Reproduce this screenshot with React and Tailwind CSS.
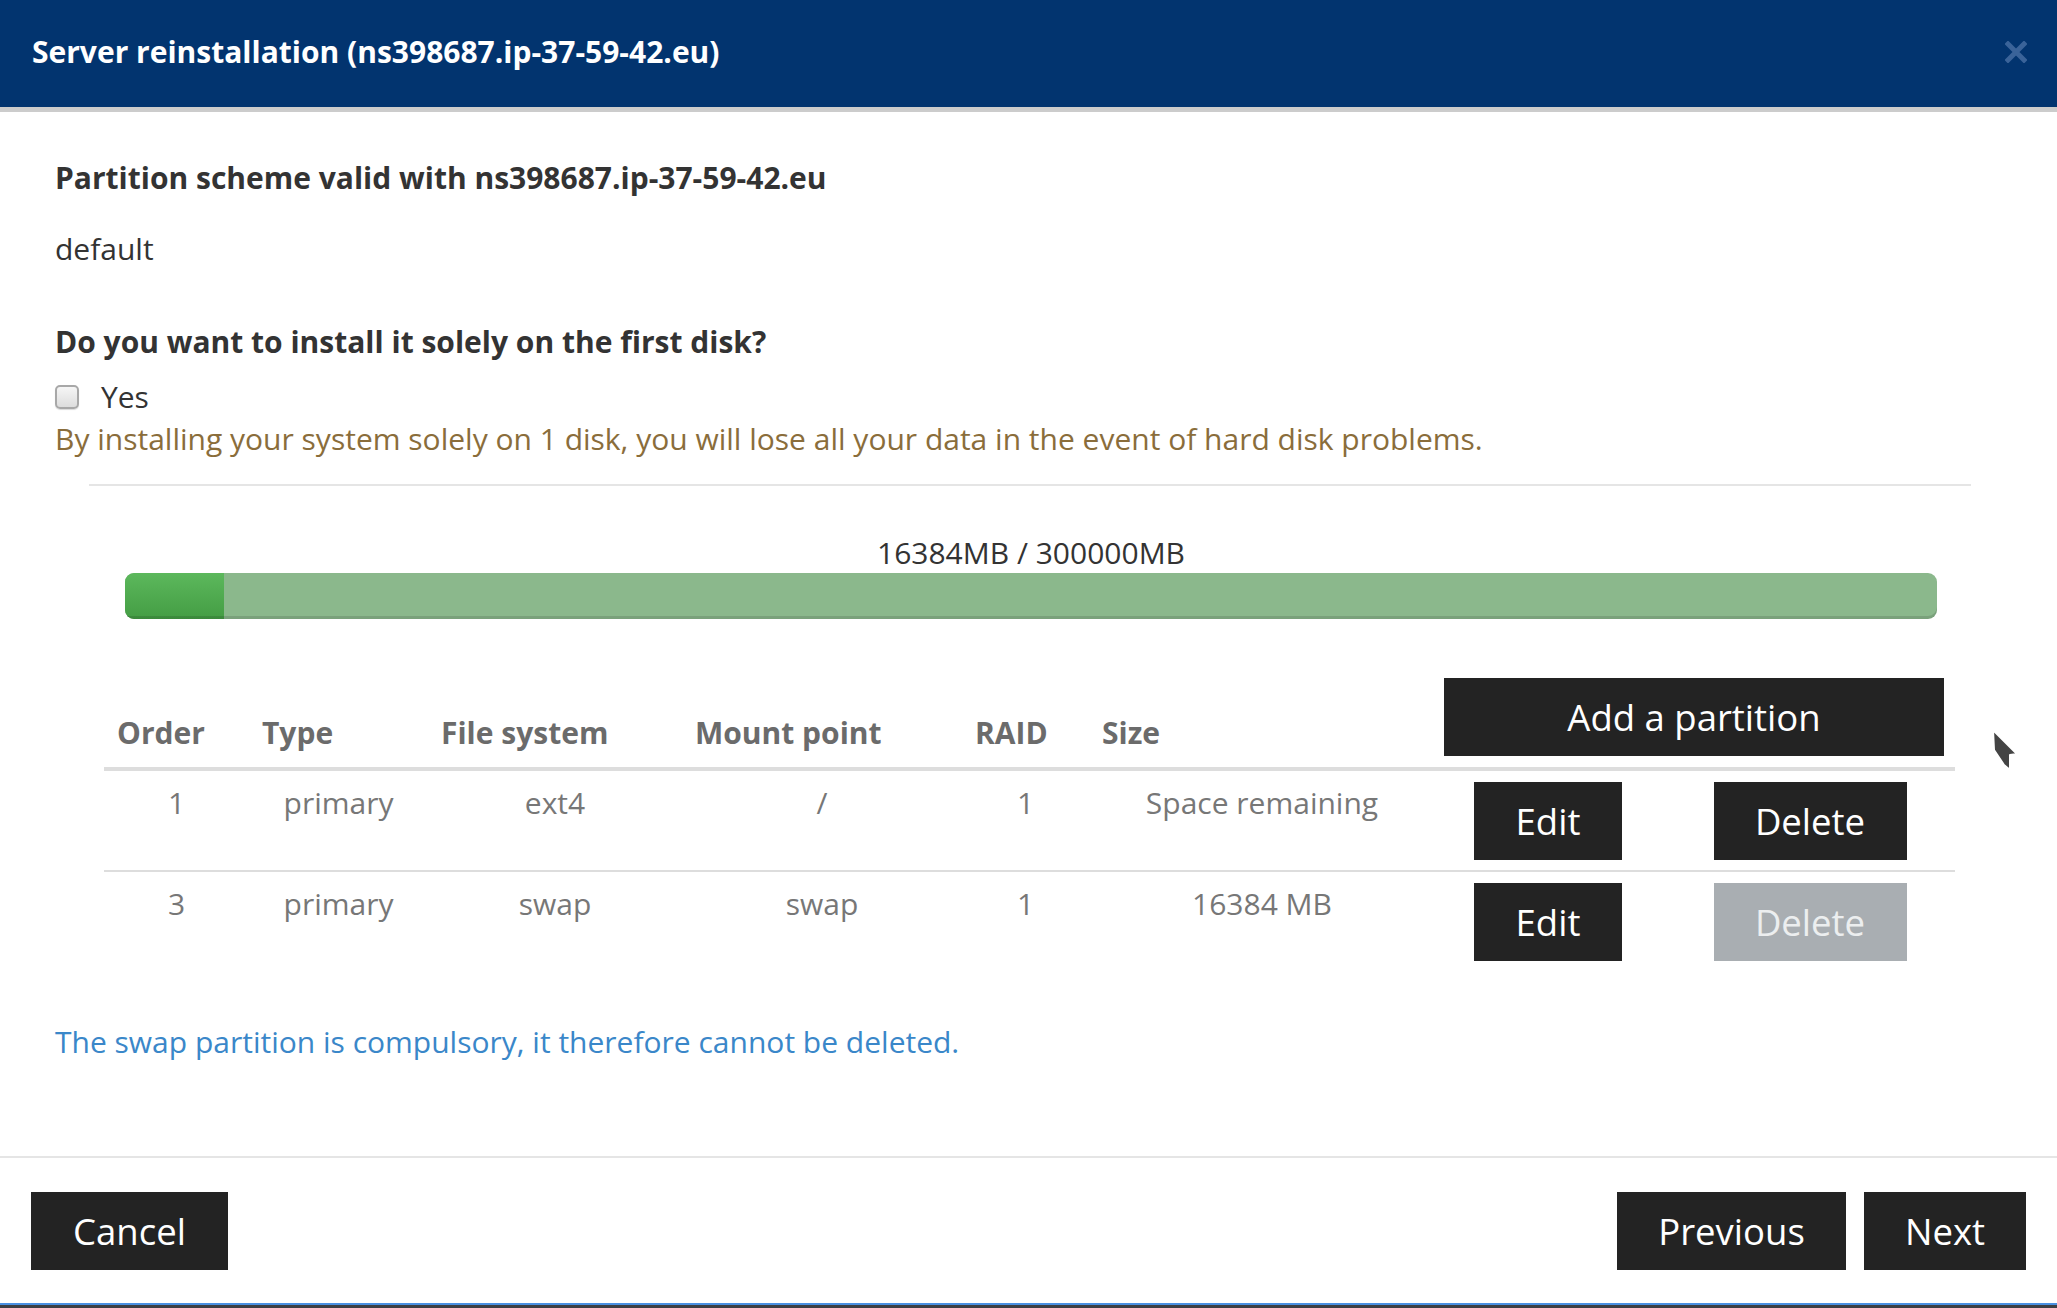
import React from 'react'

const rows = [
  { order: '1', type: 'primary', fs: 'ext4', mount: '/', raid: '1', size: 'Space remaining', canDelete: true },
  { order: '3', type: 'primary', fs: 'swap', mount: 'swap', raid: '1', size: '16384 MB', canDelete: false },
]

const used = 16384
const total = 300000

const DarkButton = ({ children, className = '', disabled = false }) => (
  <button
    className={`h-[78px] text-[36.5px] leading-none font-normal ${
      disabled ? 'bg-[#a9aeb2] text-[#eceeef] cursor-not-allowed' : 'bg-[#232323] text-white'
    } ${className}`}
  >
    {children}
  </button>
)

const App = () => {
  const percent = (used / total) * 100

  return (
    <div
      className="relative w-[2057px] h-[1308px] bg-white overflow-hidden text-[#333]"
      style={{ fontFamily: '"Open Sans", "Noto Sans", sans-serif' }}
    >
      {/* Header */}
      <div className="h-[107px] bg-[#02346f] border-b-[5px] border-[#cccccc] box-content flex items-center justify-between pl-[32px] pr-[30px]">
        <h1 className="text-white font-bold text-[30px] leading-none -mt-[4px]">
          Server reinstallation (ns398687.ip-37-59-42.eu)
        </h1>
        <svg width="22" height="22" viewBox="0 0 22 22" className="-mt-[4px]">
          <path d="M3 3 L19 19 M19 3 L3 19" stroke="#3a6399" strokeWidth="5" strokeLinecap="square" />
        </svg>
      </div>

      {/* Body */}
      <div className="px-[55px] pt-[46px] pb-[94px]">
        <h2 className="font-bold text-[30px] leading-[40px] text-[#333]">
          Partition scheme valid with ns398687.ip-37-59-42.eu
        </h2>
        <p className="mt-[31px] text-[30px] leading-[40px]">default</p>

        <h2 className="mt-[53px] font-bold text-[30px] leading-[40px]">
          Do you want to install it solely on the first disk?
        </h2>
        <label className="mt-[14px] flex items-center gap-[22px] text-[30px] leading-[42px]">
          <span className="w-[24px] h-[24px] rounded-[5px] border-2 border-[#a8a8a8] bg-gradient-to-b from-[#f6f6f6] to-[#dddddd] shadow-[0_1px_1px_rgba(0,0,0,0.15)]" />
          Yes
        </label>
        <p className="text-[30px] leading-[42px] text-[#8a6d3b]">
          By installing your system solely on 1 disk, you will lose all your data in the event of hard disk problems.
        </p>

        {/* Partition section */}
        <div className="ml-[34px] mr-[31px] mt-[24px] border-t-2 border-[#e5e5e5]">
          <div className="ml-[36px] mr-[34px] mt-[47px] text-center text-[30px] leading-[40px] text-[#333]">
            16384MB / 300000MB
          </div>
          <div className="ml-[36px] mr-[34px] h-[46px] rounded-[9px] bg-[#8bb88c] shadow-[inset_0_-3px_0_rgba(0,0,0,0.12)] overflow-hidden">
            <div
              className="h-full bg-gradient-to-b from-[#5cb85c] to-[#449d44] shadow-[inset_0_-3px_0_rgba(0,0,0,0.12)]"
              style={{ width: `${percent}%` }}
            />
          </div>

          <table className="mt-[48px] ml-[15px] table-fixed border-collapse w-[1851px]">
            <colgroup>
              <col className="w-[145px]" />
              <col className="w-[179px]" />
              <col className="w-[254px]" />
              <col className="w-[280px]" />
              <col className="w-[127px]" />
              <col className="w-[346px]" />
              <col className="w-[248px]" />
              <col className="w-[272px]" />
            </colgroup>
            <thead>
              <tr className="border-b-4 border-[#dddddd] text-[30px] leading-[40px] font-bold text-[#6b6b6b]">
                <th className="text-left align-bottom pl-[13px] pb-[14px]">Order</th>
                <th className="text-left align-bottom pl-[13px] pb-[14px]">Type</th>
                <th className="text-left align-bottom pl-[13px] pb-[14px]">File system</th>
                <th className="text-left align-bottom pl-[13px] pb-[14px]">Mount point</th>
                <th className="text-left align-bottom pl-[13px] pb-[14px]">RAID</th>
                <th className="text-left align-bottom pl-[13px] pb-[14px]">Size</th>
                <th colSpan={2} className="py-[11px] pl-[9px] pr-[11px]">
                  <DarkButton className="w-full">Add a partition</DarkButton>
                </th>
              </tr>
            </thead>
            <tbody>
              {rows.map((r, i) => (
                <tr
                  key={r.order}
                  className={`text-[30px] leading-[40px] text-[#777] ${i === 0 ? 'border-b-2 border-[#dddddd]' : ''}`}
                >
                  <td className="text-center align-top pt-[12px]">{r.order}</td>
                  <td className="text-center align-top pt-[12px]">{r.type}</td>
                  <td className="text-center align-top pt-[12px]">{r.fs}</td>
                  <td className="text-center align-top pt-[12px]">{r.mount}</td>
                  <td className="text-center align-top pt-[12px]">{r.raid}</td>
                  <td className="text-center align-top pt-[12px]">{r.size}</td>
                  <td className="text-center align-top pt-[11px] pb-[10px] pr-[22px]">
                    <DarkButton className="w-[148px]">Edit</DarkButton>
                  </td>
                  <td className="text-center align-top pt-[11px] pb-[10px] pr-[18px]">
                    <DarkButton className="w-[193px]" disabled={!r.canDelete}>
                      Delete
                    </DarkButton>
                  </td>
                </tr>
              ))}
            </tbody>
          </table>
        </div>

        <p className="mt-[51px] text-[30px] leading-[40px] text-[#3a87c9]">
          The swap partition is compulsory, it therefore cannot be deleted.
        </p>
      </div>

      {/* Footer */}
      <div className="border-t-2 border-[#e5e5e5] px-[31px] pt-[34px] flex items-center justify-between">
        <DarkButton className="w-[197px]">Cancel</DarkButton>
        <div className="flex items-center gap-[18px]">
          <DarkButton className="w-[229px]">Previous</DarkButton>
          <DarkButton className="w-[162px]">Next</DarkButton>
        </div>
      </div>

      {/* bottom window edge */}
      <div className="absolute left-0 right-0 bottom-0 h-[5px] bg-[#3c3f44] border-t-2 border-[#4a90e2]" />

      {/* mouse cursor */}
      <svg className="absolute left-[1991px] top-[728px]" width="30" height="46" viewBox="0 0 30 46">
        <path
          d="M2 2 L26 26 L19 27 L19 42 L13 37 L3 22 Z"
          fill="#444"
          stroke="#fff"
          strokeWidth="2"
          strokeLinejoin="round"
        />
      </svg>
    </div>
  )
}

export default App
